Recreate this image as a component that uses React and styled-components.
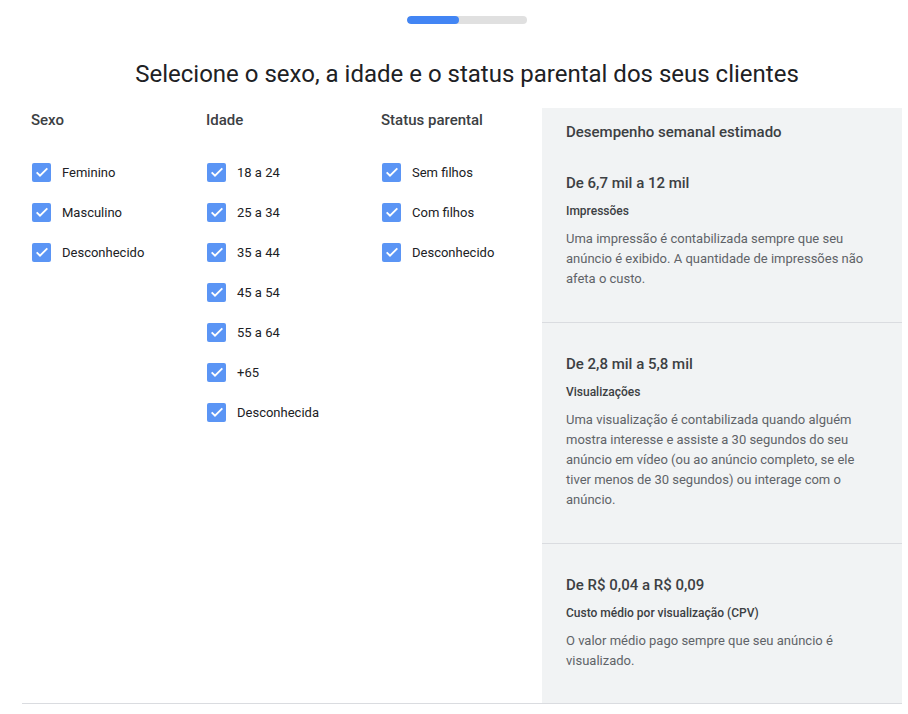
import styled, { createGlobalStyle } from "styled-components";

const Global = createGlobalStyle`
  body {
    margin: 0;
    background: #fff;
    font-family: Roboto, "Liberation Sans", Arial, sans-serif;
    color: #202124;
  }
  * { box-sizing: border-box; }
`

const Page = styled.div`
  width: 908px;
  height: 714px;
  overflow: hidden;
`
const Top = styled.div`
  padding: 16px 0 0 26px;
  display: flex;
  flex-direction: column;
  align-items: center;
`
const Progress = styled.div`
  width: 120px;
  height: 8px;
  border-radius: 4px;
  background: #e0e0e0;
  overflow: hidden;
  div{
    height: 100%;
    border-radius: 4px;
    background: #4285f4;
  }
`
const Title = styled.h1`
  margin: 36px 0 20px;
  font-size: 24px;
  line-height: 28px;
  font-weight: 400;
  color: #202124;
`
const Content = styled.div`
  margin-left: 22px;
  width: 880px;
  display: flex;
  border-bottom: 1px solid #dadce0;
`
const Choices = styled.div`
  width: 520px;
  display: flex;
  padding-left: 9px;
`
const Column = styled.div`
  width: ${p => p.$w || 175}px;
  display: flex;
  flex-direction: column;
`
const ColTitle = styled.h3`
  margin: 0 0 20px;
  font-size: 15px;
  line-height: 24px;
  font-weight: 500;
  color: #3c4043;
`
const Row = styled.label`
  height: 40px;
  display: flex;
  align-items: center;
  gap: 11px;
  font-size: 13px;
  color: #202124;
`
const Box = styled.span`
  width: 19px;
  height: 19px;
  margin-left: 1px;
  border-radius: 2px;
  background: #5b95f5;
  display: flex;
  align-items: center;
  justify-content: center;
`
const Panel = styled.div`
  width: 360px;
  background: #f1f3f4;
  display: flex;
  flex-direction: column;
`
const PanelTitle = styled.h2`
  margin: 0;
  padding: 12px 24px 0;
  font-size: 15px;
  line-height: 24px;
  font-weight: 500;
  color: #3c4043;
`
const Section = styled.div`
  padding: ${p => p.$first ? 27 : 29}px 24px ${p => p.$last ? 32 : 33}px;
  border-bottom: ${p => p.$last ? "none" : "1px solid #dadce0"};
  h4{
    margin: 0;
    font-size: 15px;
    line-height: 24px;
    font-weight: 500;
    color: #3c4043;
  }
  h5{
    margin: 6px 0 8px;
    font-size: 12px;
    line-height: 20px;
    font-weight: 500;
    color: #3c4043;
  }
  p{
    margin: 0;
    font-size: 13px;
    line-height: 20px;
    color: #5f6368;
  }
`

const Check = ({ label }) => (
  <Row>
    <Box>
      <svg width="16" height="16" viewBox="0 0 24 24">
        <path d="M4 12.5l5 5L20 6.5" fill="none" stroke="#fff" strokeWidth="2.8" />
      </svg>
    </Box>
    {label}
  </Row>
)

const columns = [
  { title: "Sexo", items: ["Feminino", "Masculino", "Desconhecido"] },
  { title: "Idade", items: ["18 a 24", "25 a 34", "35 a 44", "45 a 54", "55 a 64", "+65", "Desconhecida"] },
  { title: "Status parental", items: ["Sem filhos", "Com filhos", "Desconhecido"], w: 161 },
]

const stats = [
  {
    value: "De 6,7 mil a 12 mil",
    label: "Impressões",
    text: "Uma impressão é contabilizada sempre que seu anúncio é exibido. A quantidade de impressões não afeta o custo.",
  },
  {
    value: "De 2,8 mil a 5,8 mil",
    label: "Visualizações",
    text: "Uma visualização é contabilizada quando alguém mostra interesse e assiste a 30 segundos do seu anúncio em vídeo (ou ao anúncio completo, se ele tiver menos de 30 segundos) ou interage com o anúncio.",
  },
  {
    value: "De R$ 0,04 a R$ 0,09",
    label: "Custo médio por visualização (CPV)",
    text: "O valor médio pago sempre que seu anúncio é visualizado.",
  },
]

function App() {
  return (
    <Page>
      <Global />
      <Top>
        <Progress><div style={{ width: "43%" }} /></Progress>
        <Title>Selecione o sexo, a idade e o status parental dos seus clientes</Title>
      </Top>
      <Content>
        <Choices>
          {columns.map(c => (
            <Column key={c.title} $w={c.w}>
              <ColTitle>{c.title}</ColTitle>
              {c.items.map(i => <Check key={i} label={i} />)}
            </Column>
          ))}
        </Choices>
        <Panel>
          <PanelTitle>Desempenho semanal estimado</PanelTitle>
          {stats.map((s, i) => (
            <Section key={s.label} $first={i === 0} $last={i === stats.length - 1}>
              <h4>{s.value}</h4>
              <h5>{s.label}</h5>
              <p>{s.text}</p>
            </Section>
          ))}
        </Panel>
      </Content>
    </Page>
  )
}

export default App;
